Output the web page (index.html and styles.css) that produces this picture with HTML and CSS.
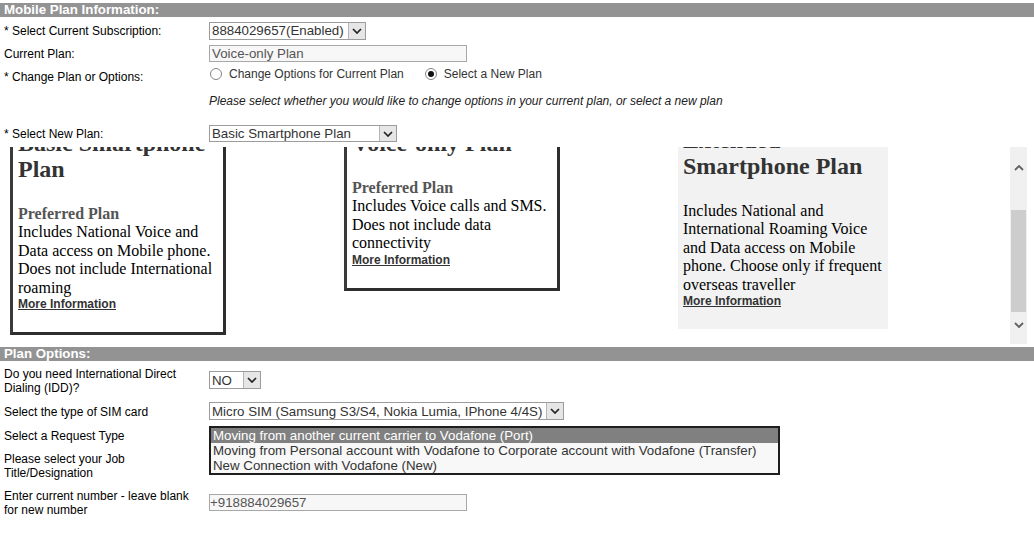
FILE: index.html
```html
<!DOCTYPE html>
<html lang="en">
<head>
    <meta charset="UTF-8">
    <meta name="viewport" content="width=device-width, initial-scale=1.0">
    <title>Mobile Plan Information</title>
    <!-- CSS Styles -->
    <link rel="stylesheet" href="styles.css">
</head>
<body>

    <!-- Mobile Plan Information -->
    <div class="section-title">Mobile Plan Information:</div>

    <div class="field f-sub">
        <div class="label">* Select Current Subscription:</div>
        <div class="control">
            <div class="select select-sub">
                <span class="select-text">8884029657(Enabled)</span>
                <span class="select-arrow"><svg width="10" height="6" viewBox="0 0 10 6"><path d="M1 1l4 4 4-4" fill="none" stroke="#222" stroke-width="1.7"/></svg></span>
            </div>
        </div>
    </div>

    <div class="field f-plan">
        <div class="label">Current Plan:</div>
        <div class="control">
            <div class="input input-wide">Voice-only Plan</div>
        </div>
    </div>

    <div class="field f-change">
        <div class="label">* Change Plan or Options:</div>
        <div class="control radios">
            <span class="radio-option"><span class="radio"></span>Change Options for Current Plan</span>
            <span class="radio-option"><span class="radio checked"></span>Select a New Plan</span>
        </div>
    </div>

    <div class="field note">
        <div class="label"></div>
        <div class="control">Please select whether you would like to change options in your current plan, or select a new plan</div>
    </div>

    <div class="field f-newplan">
        <div class="label">* Select New Plan:</div>
        <div class="control">
            <div class="select select-plan">
                <span class="select-text">Basic Smartphone Plan</span>
                <span class="select-arrow"><svg width="10" height="6" viewBox="0 0 10 6"><path d="M1 1l4 4 4-4" fill="none" stroke="#222" stroke-width="1.7"/></svg></span>
            </div>
        </div>
    </div>

    <!-- Plan cards (scrolled) -->
    <div class="plans">
        <div class="plans-view">
            <div class="plan-row">
                <div class="plan-card">
                    <h2>Basic Smartphone Plan</h2>
                    <div class="preferred">Preferred Plan</div>
                    <p>Includes National Voice and Data access on Mobile phone. Does not include International roaming</p>
                    <a class="more" href="#">More Information</a>
                </div>
                <div class="plan-card">
                    <h2>Voice-only Plan</h2>
                    <div class="preferred">Preferred Plan</div>
                    <p>Includes Voice calls and SMS. Does not include data connectivity</p>
                    <a class="more" href="#">More Information</a>
                </div>
                <div class="plan-card selected">
                    <h2>Extended Smartphone Plan</h2>
                    <p>Includes National and International Roaming Voice and Data access on Mobile phone. Choose only if frequent overseas traveller</p>
                    <a class="more" href="#">More Information</a>
                </div>
            </div>
        </div>
        <div class="scrollbar">
            <div class="sb-btn sb-up"><svg width="10" height="6" viewBox="0 0 10 6"><path d="M1 5l4-4 4 4" fill="none" stroke="#606060" stroke-width="1.8"/></svg></div>
            <div class="sb-thumb"></div>
            <div class="sb-btn sb-down"><svg width="10" height="6" viewBox="0 0 10 6"><path d="M1 1l4 4 4-4" fill="none" stroke="#606060" stroke-width="1.8"/></svg></div>
        </div>
    </div>

    <!-- Plan Options -->
    <div class="section-title">Plan Options:</div>

    <div class="options">
        <div class="field f-idd">
            <div class="label">Do you need International Direct Dialing (IDD)?</div>
            <div class="control">
                <div class="select select-idd">
                    <span class="select-text">NO</span>
                    <span class="select-arrow"><svg width="10" height="6" viewBox="0 0 10 6"><path d="M1 1l4 4 4-4" fill="none" stroke="#222" stroke-width="1.7"/></svg></span>
                </div>
            </div>
        </div>

        <div class="field f-sim">
            <div class="label">Select the type of SIM card</div>
            <div class="control">
                <div class="select select-sim">
                    <span class="select-text">Micro SIM (Samsung S3/S4, Nokia Lumia, IPhone 4/4S)</span>
                    <span class="select-arrow"><svg width="10" height="6" viewBox="0 0 10 6"><path d="M1 1l4 4 4-4" fill="none" stroke="#222" stroke-width="1.7"/></svg></span>
                </div>
            </div>
        </div>

        <div class="field f-request">
            <div class="label">Select a Request Type</div>
            <div class="control">
                <div class="select select-request">
                    <span class="select-text">Moving from another current carrier to Vodafone (Port)</span>
                </div>
                <!-- open dropdown list -->
                <ul class="listbox">
                    <li class="active">Moving from another current carrier to Vodafone (Port)</li>
                    <li>Moving from Personal account with Vodafone to Corporate account with Vodafone (Transfer)</li>
                    <li>New Connection with Vodafone (New)</li>
                </ul>
            </div>
        </div>

        <div class="field f-job">
            <div class="label">Please select your Job Title/Designation</div>
            <div class="control">
                <div class="input input-wide"></div>
            </div>
        </div>

        <div class="field f-number">
            <div class="label">Enter current number - leave blank for new number</div>
            <div class="control">
                <div class="input input-wide input-tight">+918884029657</div>
            </div>
        </div>
    </div>

</body>
</html>
```

FILE: styles.css
```css
body {
    margin: 0;
    padding-top: 3px;
    font-family: "Liberation Sans", Arial, sans-serif;
    font-size: 12px;
    color: #000;
    background-color: #fff;
}
.section-title {
    height: 14px;
    line-height: 14px;
    padding-left: 4px;
    background-color: #939393;
    color: #fff;
    font-size: 13.3px;
    font-weight: bold;
}
/* Form rows */
.field {
    display: flex;
    align-items: center;
    min-height: 23px;
}
.label {
    width: 190px;
    padding-left: 4px;
    padding-right: 15px;
    line-height: 14px;
    flex-shrink: 0;
}
.control {
    position: relative;
}
.f-sub {
    margin-top: 2px;
}
.f-change {
    align-items: flex-start;
}
.f-change .label {
    padding-top: 5px;
}
.note {
    height: 26px;
    font-style: italic;
    color: #222;
}
.f-newplan {
    margin-top: 8px;
}
/* Fake selects and inputs */
.select {
    display: flex;
    align-items: center;
    box-sizing: border-box;
    height: 18px;
    border: 1px solid #9c9c9c;
    background-color: #fff;
    font-size: 13.3px;
    color: #333;
}
.select-text {
    flex: 1;
    padding-left: 2px;
    white-space: nowrap;
    overflow: hidden;
}
.select-arrow {
    display: flex;
    align-items: center;
    justify-content: center;
    box-sizing: border-box;
    width: 17px;
    height: 16px;
    border-left: 1px solid #b5b5b5;
    background-color: #e6e6e6;
}
.select-sub {
    width: 157px;
}
.select-plan {
    width: 188px;
    height: 17px;
}
.select-plan .select-arrow {
    height: 15px;
}
.select-idd {
    width: 52px;
}
.select-sim {
    width: 355px;
}
.select-request {
    width: 571px;
}
.input {
    box-sizing: border-box;
    height: 17px;
    line-height: 15px;
    padding-left: 2px;
    border: 1px solid #a8a8a8;
    background-color: #f7f7f7;
    font-size: 13.3px;
    color: #555;
}
.input-wide {
    width: 258px;
}
.input-tight {
    padding-left: 0;
}
/* Radios */
.radios {
    display: flex;
    padding-top: 2px;
    color: #333;
}
.radio-option {
    display: flex;
    align-items: center;
    margin-right: 20px;
    line-height: 14px;
}
.radio {
    position: relative;
    box-sizing: border-box;
    width: 12px;
    height: 12px;
    margin: 0 7px 0 1px;
    border: 1px solid #858585;
    border-radius: 50%;
    background-color: #fff;
}
.radio.checked::after {
    content: '';
    position: absolute;
    left: 2px;
    top: 2px;
    width: 6px;
    height: 6px;
    border-radius: 50%;
    background-color: #111;
}
/* Plan cards area */
.plans {
    display: flex;
    height: 198px;
    margin: 2px 0;
    overflow: hidden;
}
.plans-view {
    width: 1010px;
    overflow: hidden;
}
.plan-row {
    display: grid;
    grid-template-columns: repeat(3, 334px);
    align-items: start;
    padding-left: 10px;
    margin-top: -20px;
}
.plan-card {
    box-sizing: border-box;
    width: 216px;
    padding: 0 3px 21px 5px;
    border: 3px solid #333;
    border-color: #3a3a3a #2e2e2e #2e2e2e #3a3a3a;
    font-family: "Liberation Serif", "Times New Roman", serif;
    font-size: 16px;
    line-height: 18.4px;
}
.plan-card.selected {
    width: 210px;
    border: 0;
    background-color: #f2f2f2;
}
.plan-card h2 {
    margin: 0 0 23px;
    font-size: 24px;
    line-height: 26px;
    color: #333;
}
.plan-card .preferred {
    font-weight: bold;
    color: #555;
}
.plan-card p {
    margin: 0;
}
.more {
    display: block;
    font-family: "Liberation Sans", Arial, sans-serif;
    font-size: 12px;
    line-height: 14px;
    font-weight: bold;
    color: #333;
}
/* Scrollbar */
.scrollbar {
    display: flex;
    flex-direction: column;
    width: 17px;
    height: 197px;
    background-color: #f0f0f0;
}
.sb-btn {
    display: flex;
    justify-content: center;
    align-items: center;
}
.sb-up {
    height: 42px;
}
.sb-thumb {
    width: 15px;
    height: 102px;
    margin: 21px 0 0 1px;
    background-color: #cdcdcd;
}
.sb-down {
    flex: 1;
    padding-bottom: 6px;
}
/* Plan options rows */
.options {
    padding-top: 1px;
}
.options .label {
    padding-top: 1px;
}
.f-idd {
    height: 36px;
}
.f-sim {
    height: 26px;
}
.f-request {
    height: 22px;
}
.f-job {
    height: 36px;
}
.f-number {
    height: 38px;
}
.listbox {
    position: absolute;
    top: -1px;
    left: 0;
    z-index: 1;
    box-sizing: border-box;
    width: 571px;
    margin: 0;
    padding: 0;
    list-style: none;
    border: 2px solid #1e1e1e;
    background-color: #f8f8f8;
    font-size: 13.3px;
    color: #333;
}
.listbox li {
    height: 15px;
    line-height: 15px;
    padding-left: 2px;
    white-space: nowrap;
}
.listbox li.active {
    background-color: #808080;
    color: #fff;
}
```
